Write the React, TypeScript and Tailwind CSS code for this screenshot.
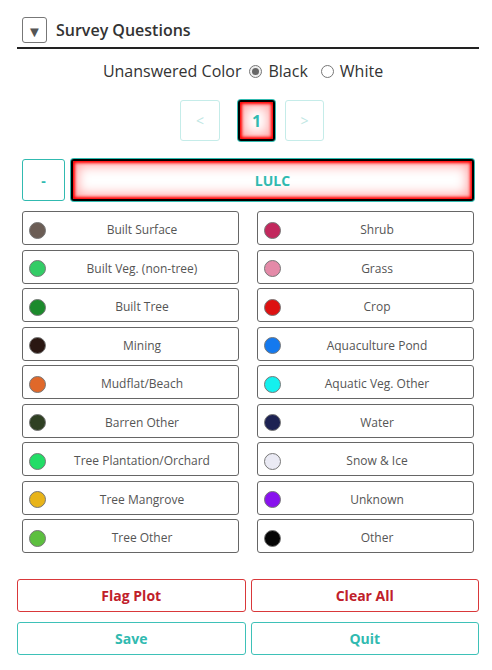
import React from 'react';

const OPTIONS: [string, string][] = [
  ['Built Surface', '#6b5d55'],
  ['Shrub', '#c2285d'],
  ['Built Veg. (non-tree)', '#33cc66'],
  ['Grass', '#e48aa8'],
  ['Built Tree', '#1c8a2c'],
  ['Crop', '#dd1111'],
  ['Mining', '#2a1712'],
  ['Aquaculture Pond', '#1479ee'],
  ['Mudflat/Beach', '#e0682a'],
  ['Aquatic Veg. Other', '#14f0ee'],
  ['Barren Other', '#2f4023'],
  ['Water', '#1d2253'],
  ['Tree Plantation/Orchard', '#22dd66'],
  ['Snow & Ice', '#eaeaf4'],
  ['Tree Mangrove', '#e8b419'],
  ['Unknown', '#8811ee'],
  ['Tree Other', '#5cbf3f'],
  ['Other', '#060606'],
];

const selectedGlow =
  'border-2 border-black shadow-[0_0_0_1px_#31bab0,inset_0_0_3px_2px_#ff0000,inset_0_0_12px_5px_#ffa5a5]';

const App: React.FC = () => {
  return (
    <div className="w-[492px] h-[670px] bg-white pl-[17px] pr-[13px] pt-[17px] font-['Open_Sans',sans-serif] text-[#333]">
      {/* header */}
      <div className="flex items-center gap-[9px] pl-[5px] pb-[4px] border-b-2 border-[#222]">
        <button className="w-[25px] h-[26px] rounded-[3px] border border-[#777] flex items-center justify-center text-[#555] text-[15px] leading-none pt-[3px]">
          ▼
        </button>
        <span className="text-[16px] font-semibold text-[#333]">Survey Questions</span>
      </div>

      {/* unanswered color */}
      <div className="flex items-center justify-center mt-[11px] text-[16px] text-[#333] h-[22px] pr-[10px]">
        <span>Unanswered Color</span>
        <span className="ml-[8px] w-[13px] h-[13px] rounded-full border border-[#777] bg-[#eee] flex items-center justify-center">
          <span className="w-[7px] h-[7px] rounded-full bg-[#666]" />
        </span>
        <span className="ml-[6px]">Black</span>
        <span className="ml-[13px] w-[13px] h-[13px] rounded-full border border-[#777]" />
        <span className="ml-[6px]">White</span>
      </div>

      {/* pagination */}
      <div className="flex justify-center items-center mt-[18px] h-[41px] pl-[8px]">
        <button className="w-[40px] h-[41px] rounded-[3px] border border-[#c5ece9] text-[#bfe7e4] text-[14px]">&lt;</button>
        <button className={`w-[37px] h-[41px] ml-[18px] rounded-[3px] bg-white text-[#31bab0] text-[16px] font-bold ${selectedGlow}`}>1</button>
        <button className="w-[39px] h-[41px] ml-[10px] rounded-[3px] border border-[#c5ece9] text-[#bfe7e4] text-[14px]">&gt;</button>
      </div>

      {/* question row */}
      <div className="flex gap-[6px] mt-[18px] px-[5px]">
        <button className="w-[43px] h-[42px] rounded-[3px] border border-[#31bab0] text-[#31bab0] font-bold text-[14px]">-</button>
        <button className={`flex-1 h-[42px] rounded-[3px] bg-white text-[#31bab0] font-bold text-[14px] ${selectedGlow}`}>LULC</button>
      </div>

      {/* answers */}
      <div className="grid grid-cols-2 gap-x-[18px] gap-y-[4.5px] mt-[10px] px-[5px]">
        {OPTIONS.map(([label, color]) => (
          <div key={label} className="h-[34px] rounded-[3px] border border-[#666] flex items-center pl-[6px] pt-[4px]">
            <span className="w-[17px] h-[17px] rounded-full border border-[#777] shrink-0" style={{ backgroundColor: color }} />
            <span className="flex-1 text-center text-[12px] text-[#555]">{label}</span>
          </div>
        ))}
      </div>

      {/* actions */}
      <div className="grid grid-cols-2 gap-x-[5px] gap-y-[10px] mt-[26px]">
        <button className="h-[33px] rounded-[3px] border border-[#d9383a] text-[#c0202a] font-bold text-[14px]">Flag Plot</button>
        <button className="h-[33px] rounded-[3px] border border-[#d9383a] text-[#c0202a] font-bold text-[14px]">Clear All</button>
        <button className="h-[33px] rounded-[3px] border border-[#3ec1b8] text-[#31bab0] font-bold text-[14px]">Save</button>
        <button className="h-[33px] rounded-[3px] border border-[#3ec1b8] text-[#31bab0] font-bold text-[14px]">Quit</button>
      </div>
    </div>
  );
};

export default App;
